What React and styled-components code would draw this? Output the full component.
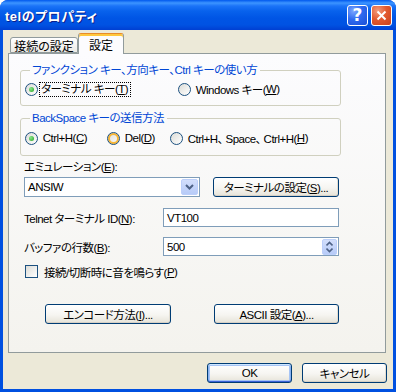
import React from "react";
import styled, { createGlobalStyle, css } from "styled-components";

const GlobalStyle = createGlobalStyle`
  html, body { margin: 0; padding: 0; background: #fff; }
  body {
    font-family: "Liberation Sans", "Noto Sans CJK JP", sans-serif;
    font-size: 11.5px;
    letter-spacing: -0.5px;
    font-feature-settings: "palt";
    color: #000;
  }
  * { box-sizing: border-box; }
`;

const Window = styled.div`
  width: 396px;
  height: 392px;
  display: flex;
  flex-direction: column;
  background: #0050E0;
  border-radius: 8px 8px 0 0;
  overflow: hidden;
`;

const TitleBar = styled.div`
  height: 30px;
  flex: none;
  display: flex;
  align-items: center;
  padding: 0 4px 0 5px;
  background: linear-gradient(
    to bottom,
    #0058ee 0px,
    #3d95ff 3px,
    #1b73f8 6px,
    #0862ec 11px,
    #0055e5 18px,
    #0052e2 25px,
    #003fd2 30px
  );
`;

const Title = styled.div`
  flex: 1;
  color: #fff;
  font-weight: bold;
  font-size: 13px;
  text-shadow: 1px 1px 0 #0a1e8c;
  letter-spacing: 0.5px;
`;

const CaptionButton = styled.div`
  width: 21px;
  height: 21px;
  margin-left: 3px;
  border: 1px solid #fff;
  border-radius: 3px;
  display: flex;
  align-items: center;
  justify-content: center;
  color: #fff;
  font-weight: bold;
  font-size: 17px;
  letter-spacing: 0;
  font-family: "DejaVu Sans", sans-serif;
  background: ${(p) =>
    p.$close
      ? "radial-gradient(circle at 30% 25%, #f29b7d 0%, #e25a30 45%, #c8401c 100%)"
      : "radial-gradient(circle at 30% 25%, #7ea8ff 0%, #2f6af0 45%, #1b4fd6 100%)"};
`;

const Body = styled.div`
  flex: 1;
  margin: 0 3px 3px;
  background: #ece9d8;
  padding: 3px 7px 0 5px;
  display: flex;
  flex-direction: column;
`;

const TabStrip = styled.div`
  height: 20px;
  display: flex;
  align-items: flex-end;
  padding-left: 2px;
  position: relative;
  z-index: 1;
`;

const Tab = styled.div`
  height: ${(p) => (p.$active ? 21 : 16)}px;
  width: ${(p) => p.$w}px;
  margin-bottom: ${(p) => (p.$active ? -1 : 0)}px;
  border: 1px solid #919b9c;
  border-bottom: ${(p) => (p.$active ? "none" : "1px solid #919b9c")};
  border-radius: 3px 3px 0 0;
  display: flex;
  align-items: ${(p) => (p.$active ? "flex-start" : "center")};
  justify-content: center;
  font-size: 12px;
  letter-spacing: 0;
  ${(p) =>
    p.$active
      ? css`
          background: #fcfcfe;
          border-top: 1px solid #e68b2c;
          box-shadow: inset 0 2px 0 #ffc73c;
          padding-top: 2px;
        `
      : css`
          background: linear-gradient(#ffffff, #ecebe6);
        `}
`;

const Panel = styled.div`
  height: 300px;
  border: 1px solid #919b9c;
  background: linear-gradient(#fcfcfe, #f4f3ee);
  padding: 9px 0 0 11px;
  display: flex;
  flex-direction: column;
`;

const Group = styled.fieldset`
  margin: ${(p) => p.$mt || 0}px 0 0 0;
  width: 321px;
  min-width: 0;
  border: 1px solid #d0d0bf;
  border-radius: 3px;
  padding: ${(p) => p.$pt}px 0 ${(p) => p.$pb}px 4px;
`;

const Legend = styled.legend`
  color: #0046d5;
  padding: 0 3px 0 2px;
  margin-left: 5px;
  line-height: 14px;
  height: 14px;
`;

const RadioRow = styled.div`
  display: flex;
  height: 16px;
  align-items: center;
`;

const RadioItem = styled.label`
  display: flex;
  align-items: center;
  width: ${(p) => (p.$w ? `${p.$w}px` : "auto")};
  white-space: nowrap;
`;

const Radio = styled.span`
  width: 13px;
  height: 13px;
  flex: none;
  margin-right: 2px;
  border-radius: 50%;
  border: 1px solid #1c5180;
  background: linear-gradient(135deg, #dcdcd7 0%, #ffffff 100%);
  display: flex;
  align-items: center;
  justify-content: center;
  ${(p) =>
    p.$hover &&
    css`
      box-shadow: inset 0 0 0 2px #f8b636;
    `}
  &::after {
    content: "";
    display: ${(p) => (p.$checked ? "block" : "none")};
    width: 5px;
    height: 5px;
    border-radius: 50%;
    background: radial-gradient(circle at 35% 35%, #8ae88a, #21a121);
  }
`;

const Focus = styled.span`
  outline: 1px dotted #000;
  outline-offset: 0;
  padding: 0 2px 0 1px;
  line-height: 13px;
`;

const FieldLabel = styled.div`
  margin: 4px 0 0 4px;
  line-height: 14px;
  height: 14px;
`;

const Row = styled.div`
  display: flex;
  align-items: center;
  margin: ${(p) => p.$mt}px 0 0 4px;
`;

const RowLabel = styled.div`
  width: 139px;
`;

const Combo = styled.div`
  width: 176px;
  height: 20px;
  border: 1px solid #7f9db9;
  background: #fff;
  display: flex;
  align-items: center;
  padding-left: 3px;
`;

const ArrowButton = styled.span`
  margin-left: auto;
  margin-right: 1px;
  width: ${(p) => p.$w}px;
  height: 16px;
  border-radius: 2px;
  border: 1px solid #bccffa;
  background: linear-gradient(#d2defb, #b7cbf8);
  display: flex;
  align-items: center;
  justify-content: center;
`;

const Edit = styled.div`
  width: 176px;
  height: 19px;
  border: 1px solid #7f9db9;
  background: #fff;
  display: flex;
  align-items: center;
  padding-left: 3px;
`;

const Button = styled.button`
  width: ${(p) => p.$w}px;
  height: 20px;
  margin-left: ${(p) => p.$ml || 0}px;
  padding: 0;
  border: 1px solid #003c74;
  border-radius: 3px;
  font: inherit;
  letter-spacing: inherit;
  color: #000;
  background: linear-gradient(#ffffff 0%, #f6f5f1 55%, #e6e3d8 100%);
  box-shadow: ${(p) =>
    p.$default
      ? "inset 0 1px 0 #cee7ff, inset 0 -1px 0 #3d62d7, inset 1px 0 0 #88b2f0, inset -1px 0 0 #88b2f0, inset 0 0 0 2px #a6c4f5"
      : "inset 0 -1px 0 #d6d0c5, inset -1px 0 0 #e2ddd1"};
`;

const CheckRow = styled.label`
  display: flex;
  align-items: center;
  margin: 9px 0 0 5px;
  height: 13px;
`;

const CheckBox = styled.span`
  width: 13px;
  height: 13px;
  flex: none;
  margin-right: 6px;
  border: 1px solid #1c5180;
  background: linear-gradient(135deg, #dcdcd7 0%, #ffffff 100%);
`;

const ButtonRow = styled.div`
  display: flex;
  margin: 26px 0 0 25px;
`;

const Footer = styled.div`
  display: flex;
  justify-content: flex-end;
  margin: 10px -1px 0 0;
  gap: 10px;
`;

const Chevron = () => (
  <svg width="9" height="6" viewBox="0 0 9 6">
    <path d="M1 1 L4.5 4.5 L8 1" fill="none" stroke="#4d6185" strokeWidth="2" />
  </svg>
);

const SpinArrows = () => (
  <svg width="7" height="12" viewBox="0 0 7 12">
    <path d="M0.5 4.5 L3.5 1.5 L6.5 4.5" fill="none" stroke="#4d6185" strokeWidth="1.6" />
    <path d="M0.5 7.5 L3.5 10.5 L6.5 7.5" fill="none" stroke="#4d6185" strokeWidth="1.6" />
  </svg>
);

const CloseX = () => (
  <svg width="11" height="11" viewBox="0 0 11 11">
    <path d="M1.5 1.5 L9.5 9.5 M9.5 1.5 L1.5 9.5" stroke="#fff" strokeWidth="2" />
  </svg>
);

export default function App() {
  return (
    <>
      <GlobalStyle />
      <Window>
        <TitleBar>
          <Title>telのプロパティ</Title>
          <CaptionButton>?</CaptionButton>
          <CaptionButton $close>
            <CloseX />
          </CaptionButton>
        </TitleBar>
        <Body>
          <TabStrip>
            <Tab $w={68}>接続の設定</Tab>
            <Tab $w={46} $active>
              設定
            </Tab>
          </TabStrip>
          <Panel>
            <Group $pt={4} $pb={8}>
              <Legend>ファンクション キー、方向キー、Ctrl キーの使い方</Legend>
              <RadioRow>
                <RadioItem $w={153}>
                  <Radio $checked />
                  <Focus>
                    ターミナル キー(<u>T</u>)
                  </Focus>
                </RadioItem>
                <RadioItem>
                  <Radio />
                  &nbsp;Windows キー(<u>W</u>)
                </RadioItem>
              </RadioRow>
            </Group>
            <Group $mt={5} $pt={5} $pb={9}>
              <Legend>BackSpace キーの送信方法</Legend>
              <RadioRow>
                <RadioItem $w={82}>
                  <Radio $checked />
                  &nbsp;Ctrl+H(<u>C</u>)
                </RadioItem>
                <RadioItem $w={63}>
                  <Radio $hover />
                  &nbsp;Del(<u>D</u>)
                </RadioItem>
                <RadioItem>
                  <Radio />
                  &nbsp;Ctrl+H、 Space、 Ctrl+H(<u>H</u>)
                </RadioItem>
              </RadioRow>
            </Group>
            <FieldLabel>
              エミュレーション(<u>E</u>):
            </FieldLabel>
            <Row $mt={3}>
              <Combo>
                ANSIW
                <ArrowButton $w={17}>
                  <Chevron />
                </ArrowButton>
              </Combo>
              <Button $w={126} $ml={13}>
                ターミナルの設定(<u>S</u>)...
              </Button>
            </Row>
            <Row $mt={11}>
              <RowLabel>
                Telnet ターミナル ID(<u>N</u>):
              </RowLabel>
              <Edit>VT100</Edit>
            </Row>
            <Row $mt={10}>
              <RowLabel>
                バッファの行数(<u>B</u>):
              </RowLabel>
              <Edit>
                500
                <ArrowButton $w={15}>
                  <SpinArrows />
                </ArrowButton>
              </Edit>
            </Row>
            <CheckRow>
              <CheckBox />
              接続/切断時に音を鳴らす(<u>P</u>)
            </CheckRow>
            <ButtonRow>
              <Button $w={126}>
                エンコード方法(<u>I</u>)...
              </Button>
              <Button $w={125} $ml={43}>
                ASCII 設定(<u>A</u>)...
              </Button>
            </ButtonRow>
          </Panel>
          <Footer>
            <Button $w={85} $default>
              OK
            </Button>
            <Button $w={85}>キャンセル</Button>
          </Footer>
        </Body>
      </Window>
    </>
  );
}
